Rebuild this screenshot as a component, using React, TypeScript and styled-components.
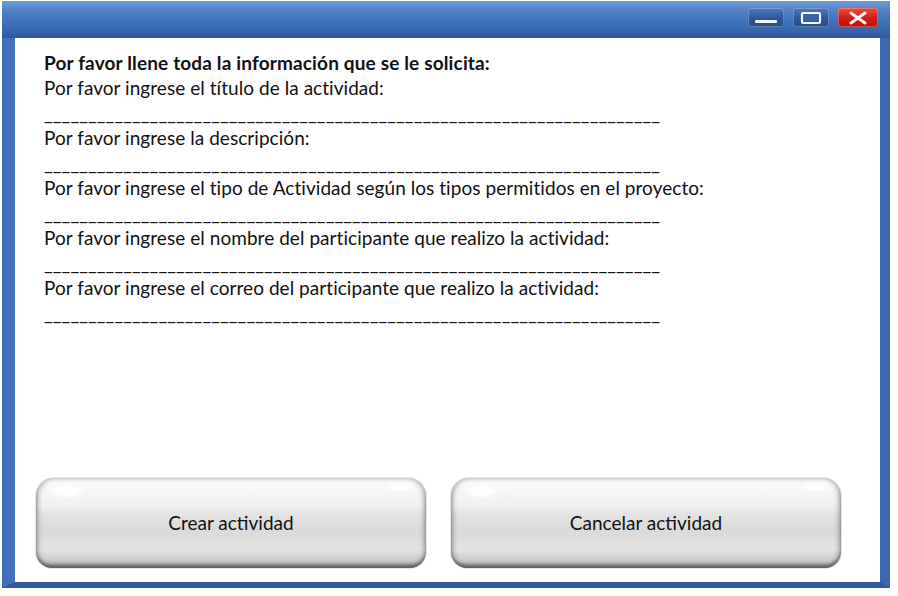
import React from "react";
import styled, { createGlobalStyle } from "styled-components";

const Global = createGlobalStyle`
  html, body { margin: 0; padding: 0; background: #ffffff; }
  body { width: 898px; height: 596px; overflow: hidden; }
`;

const Window = styled.div`
  margin: 1px 0 0 2px;
  width: 888px;
  height: 587px;
  display: flex;
  flex-direction: column;
  box-sizing: border-box;
`;

const TitleBar = styled.div`
  height: 37px;
  flex: none;
  display: flex;
  justify-content: flex-end;
  align-items: flex-start;
  padding: 7px 12px 0 0;
  gap: 9px;
  box-sizing: border-box;
  background: linear-gradient(#6f9bd6 0%, #4d7fc4 30%, #3b6cb4 70%, #2c5a9f 100%);
`;

const Frame = styled.div`
  flex: 1;
  display: flex;
  border-left: 13px solid #3f70b8;
  border-right: 10px solid #3a69b0;
  border-bottom: 6px solid #2e5a9e;
  box-shadow: inset 1px 0 0 #a9c4e8, inset -1px 0 0 #a9c4e8, inset 0 -1px 0 #a9c4e8;
  background: #ffffff;
`;

const Content = styled.div`
  flex: 1;
  display: flex;
  flex-direction: column;
  padding: 12px 0 14px 29px;
  background: #ffffff;
  font-family: Lato, "Open Sans", sans-serif;
  font-size: 19px;
  line-height: 25px;
  color: #111111;
`;

const Heading = styled.div`
  font-weight: 700;
  letter-spacing: 0.15px;
`;

const Line = styled.div`
  letter-spacing: 0.05px;
`;

const Blank = styled.div`
  white-space: nowrap;
  letter-spacing: 0.08px;
`;

const Buttons = styled.div`
  margin-top: auto;
  display: flex;
  gap: 25px;
  margin-left: -8px;
`;

const GlossButton = styled.button`
  position: relative;
  width: 390px;
  height: 90px;
  border: none;
  padding: 0;
  border-radius: 18px 18px 16px 16px;
  font-family: Lato, "Open Sans", sans-serif;
  font-size: 19px;
  color: #111111;
  cursor: pointer;
  overflow: hidden;
  background: linear-gradient(
    #fbfbfb 0%,
    #f1f1f1 30%,
    #e2e2e2 42%,
    #dadada 60%,
    #e4e4e4 80%,
    #c9c9c9 92%,
    #8d8d8d 100%
  );
  box-shadow: inset 3px 0 4px rgba(90, 90, 90, 0.35), inset -3px 0 4px rgba(90, 90, 90, 0.35),
    inset 0 -3px 3px rgba(60, 60, 60, 0.5), 0 0 0 1px #e6e6e6;

  &::before {
    content: "";
    position: absolute;
    left: 14px;
    top: 6px;
    width: 34px;
    height: 14px;
    border-radius: 50%;
    background: radial-gradient(ellipse at center, #ffffff 40%, rgba(255,255,255,0) 75%);
  }
  &::after {
    content: "";
    position: absolute;
    right: 12px;
    top: 4px;
    width: 30px;
    height: 10px;
    border-radius: 50%;
    background: radial-gradient(ellipse at center, #ffffff 30%, rgba(255,255,255,0) 75%);
  }
`;

const Label = styled.span`
  position: relative;
  top: -1px;
`;

const CtrlButton = styled.div<{ $close?: boolean }>`
  width: ${(p) => (p.$close ? 40 : 36)}px;
  height: 19px;
  border-radius: 3px;
  display: flex;
  align-items: center;
  justify-content: center;
  background: ${(p) =>
    p.$close
      ? "linear-gradient(#f04a3e, #d11c12 55%, #b3130b)"
      : "linear-gradient(#4f7bbd, #2d579a 55%, #274c8a)"};
  box-shadow: inset 0 0 0 1px rgba(255,255,255,0.25);
`;

const blank = "_".repeat(70);

export default function App() {
  return (
    <>
      <Global />
      <Window>
        <TitleBar>
          <CtrlButton>
            <svg width="28" height="14" viewBox="0 0 28 14">
              <rect x="3" y="9" width="22" height="3" rx="1" fill="#f4f8ff" />
            </svg>
          </CtrlButton>
          <CtrlButton>
            <svg width="28" height="14" viewBox="0 0 28 14">
              <rect x="5" y="2" width="18" height="10" rx="1" fill="none" stroke="#f4f8ff" strokeWidth="2.2" />
              <rect x="7" y="5" width="14" height="5" fill="#3562a6" />
            </svg>
          </CtrlButton>
          <CtrlButton $close>
            <svg width="28" height="14" viewBox="0 0 28 14">
              <path d="M7 2 L21 12 M21 2 L7 12" stroke="#fff4f2" strokeWidth="3" strokeLinecap="round" />
            </svg>
          </CtrlButton>
        </TitleBar>
        <Frame>
          <Content>
            <Heading>Por favor llene toda la información que se le solicita:</Heading>
            <Line>Por favor ingrese el título de la actividad:</Line>
            <Blank>{blank}</Blank>
            <Line>Por favor ingrese la descripción:</Line>
            <Blank>{blank}</Blank>
            <Line>Por favor ingrese el tipo de Actividad según los tipos permitidos en el proyecto:</Line>
            <Blank>{blank}</Blank>
            <Line>Por favor ingrese el nombre del participante que realizo la actividad:</Line>
            <Blank>{blank}</Blank>
            <Line>Por favor ingrese el correo del participante que realizo la actividad:</Line>
            <Blank>{blank}</Blank>
            <Buttons>
              <GlossButton>
                <Label>Crear actividad</Label>
              </GlossButton>
              <GlossButton>
                <Label>Cancelar actividad</Label>
              </GlossButton>
            </Buttons>
          </Content>
        </Frame>
      </Window>
    </>
  );
}
